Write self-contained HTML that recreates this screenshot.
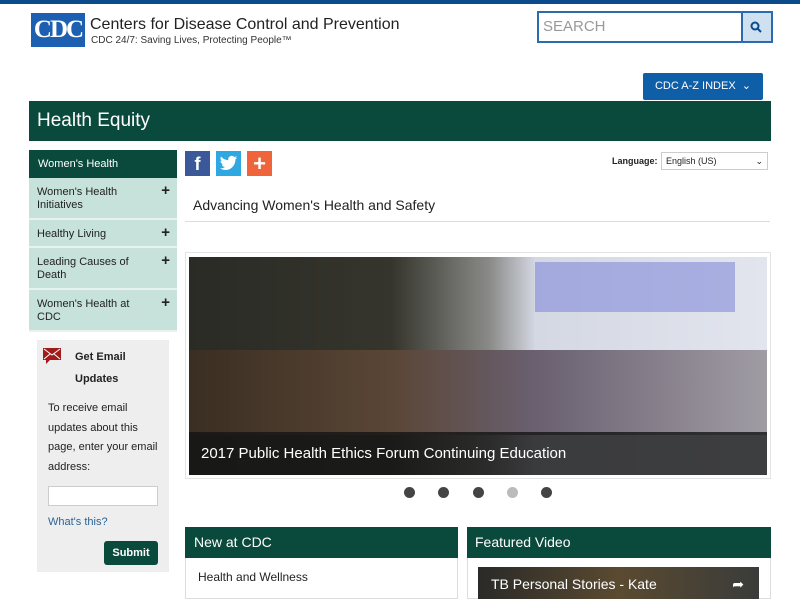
<!DOCTYPE html>
<html><head><style>
*{margin:0;padding:0;box-sizing:border-box}
body{width:800px;height:599px;overflow:hidden;background:#fff;font-family:"Liberation Sans",sans-serif;position:relative;color:#222}
.a{position:absolute}
.g{background:#0a4a3c;color:#fff}
.side{left:29px;width:148px;background:#c6e2da;font-size:11px;color:#222;padding:8px 8px 0 8px;line-height:13px;border-bottom:2px solid #e8f2ef}
.plus{position:absolute;right:7px;top:6px;font-size:15px;font-weight:bold}
</style></head><body>
<div class="a" style="left:0;top:0;width:800px;height:4px;background:#0b4a8b"></div>
<div class="a" style="left:31px;top:13px;width:54px;height:34px;background:#1d5fb0;color:#fff;font-family:'Liberation Serif',serif;font-weight:bold;font-size:25px;line-height:34px;text-align:center;letter-spacing:-2px;overflow:hidden">CDC</div>
<div class="a" style="left:90px;top:16px;font-size:16px;color:#222">Centers for Disease Control and Prevention</div>
<div class="a" style="left:91px;top:35px;font-size:10px;color:#333">CDC 24/7: Saving Lives, Protecting People™</div>
<div class="a" style="left:537px;top:11px;width:236px;height:32px;border:2px solid #2b6cb0;background:#fff"></div>
<div class="a" style="left:543px;top:18px;font-size:15px;color:#999">SEARCH</div>
<div class="a" style="left:741px;top:13px;width:30px;height:28px;background:#cfe0f1;border-left:2px solid #2b6cb0"></div>
<svg class="a" style="left:750px;top:21px" width="12" height="12"><circle cx="5" cy="5" r="3.5" stroke="#0b4a8b" stroke-width="2" fill="none"/><path d="M7.5 7.5l3.5 3.5" stroke="#0b4a8b" stroke-width="2"/></svg>
<div class="a" style="left:643px;top:73px;width:120px;height:27px;background:#0f5ea8;color:#fff;font-size:11px;line-height:27px;text-align:center;border-radius:2px">CDC A-Z INDEX &nbsp;⌄</div>
<div class="a g" style="left:29px;top:101px;width:742px;height:40px;font-size:19px;line-height:40px;padding-left:8px">Health Equity</div>
<div class="a g" style="left:29px;top:150px;width:148px;height:28px;font-size:11px;line-height:28px;padding-left:9px">Women's Health</div>
<div class="a side" style="top:178px;height:42px">Women's Health<br>Initiatives<span class="plus">+</span></div>
<div class="a side" style="top:220px;height:28px">Healthy Living<span class="plus">+</span></div>
<div class="a side" style="top:248px;height:42px">Leading Causes of<br>Death<span class="plus">+</span></div>
<div class="a side" style="top:290px;height:42px">Women's Health at<br>CDC<span class="plus">+</span></div>
<div class="a" style="left:37px;top:340px;width:132px;height:232px;background:#eee"></div>
<svg class="a" style="left:42px;top:346px" width="20" height="20"><path d="M1 2h18v12H8l-4 4v-4H1z" fill="#a01c1c"/><path d="M2 3l8 6 8-6M2 13l6-5M18 13l-6-5" stroke="#fff" fill="none"/></svg>
<div class="a" style="left:75px;top:346px;font-size:11px;font-weight:bold;line-height:22px">Get Email<br>Updates</div>
<div class="a" style="left:48px;top:399px;font-size:11px;line-height:19.5px">To receive email<br>updates about this<br>page, enter your email<br>address:</div>
<div class="a" style="left:48px;top:486px;width:110px;height:20px;background:#fff;border:1px solid #ccc"></div>
<div class="a" style="left:48px;top:516px;font-size:11px;color:#2a6496">What's this?</div>
<div class="a g" style="left:104px;top:541px;width:54px;height:24px;border-radius:3px;font-size:11px;font-weight:bold;line-height:24px;text-align:center">Submit</div>
<div class="a" style="left:185px;top:151px;width:25px;height:25px;background:#3b5998;color:#fff;font-weight:bold;font-size:18px;text-align:center;line-height:27px">f</div>
<div class="a" style="left:216px;top:151px;width:25px;height:25px;background:#2fa7e0"></div>
<svg class="a" style="left:219px;top:155px" width="19" height="17" viewBox="0 0 24 20"><path d="M23 2.5c-.8.4-1.7.6-2.6.7.9-.6 1.6-1.4 2-2.5-.9.5-1.9.9-2.9 1.1A4.5 4.5 0 0 0 11.8 5.9 12.8 12.8 0 0 1 2.5 1.2a4.5 4.5 0 0 0 1.4 6 4.5 4.5 0 0 1-2-.6 4.5 4.5 0 0 0 3.6 4.5 4.5 4.5 0 0 1-2 .1 4.5 4.5 0 0 0 4.2 3.1A9 9 0 0 1 1 16.2 12.8 12.8 0 0 0 7.9 18.2c8.3 0 12.8-6.9 12.8-12.8v-.6c.9-.6 1.6-1.4 2.3-2.3z" fill="#fff"/></svg>
<div class="a" style="left:247px;top:151px;width:25px;height:25px;background:#f0643c;color:#fff;font-weight:bold;font-size:22px;text-align:center;line-height:25px">+</div>
<div class="a" style="left:612px;top:156px;font-size:9px;font-weight:bold">Language:</div>
<div class="a" style="left:661px;top:152px;width:107px;height:18px;border:1px solid #ccc;font-size:9px;line-height:16px;padding-left:4px">English (US)<span style="position:absolute;right:4px">⌄</span></div>
<div class="a" style="left:193px;top:197px;font-size:14px">Advancing Women's Health and Safety</div>
<div class="a" style="left:185px;top:221px;width:585px;height:1px;background:#ddd"></div>
<div class="a" style="left:185px;top:252px;width:586px;height:227px;border:1px solid #e4e4e4;background:#fff"></div>
<div class="a" style="left:189px;top:257px;width:578px;height:218px;background:linear-gradient(90deg,#2a2b25 0%,#35352d 35%,#8a8a88 52%,#d4d8e2 60%,#e2e5ee 100%)"></div>
<div class="a" style="left:535px;top:262px;width:200px;height:50px;background:#7c84d8;opacity:.55"></div>
<div class="a" style="left:189px;top:350px;width:578px;height:85px;background:linear-gradient(90deg,#3a2e22,#5a4636 35%,#6a6070 60%,#a09ca4)"></div>
<div class="a" style="left:189px;top:432px;width:578px;height:43px;background:rgba(20,20,20,.8);color:#fff;font-size:15px;line-height:43px;padding-left:12px">2017 Public Health Ethics Forum Continuing Education</div>
<div class="a" style="left:404px;top:487px;width:11px;height:11px;border-radius:50%;background:#444"></div>
<div class="a" style="left:438px;top:487px;width:11px;height:11px;border-radius:50%;background:#444"></div>
<div class="a" style="left:473px;top:487px;width:11px;height:11px;border-radius:50%;background:#444"></div>
<div class="a" style="left:507px;top:487px;width:11px;height:11px;border-radius:50%;background:#bbb"></div>
<div class="a" style="left:541px;top:487px;width:11px;height:11px;border-radius:50%;background:#444"></div>
<div class="a" style="left:185px;top:527px;width:273px;height:72px;border:1px solid #ddd"></div>
<div class="a g" style="left:185px;top:527px;width:273px;height:31px;font-size:14px;line-height:31px;padding-left:9px">New at CDC</div>
<div class="a" style="left:198px;top:570px;font-size:12px">Health and Wellness</div>
<div class="a" style="left:467px;top:527px;width:304px;height:72px;border:1px solid #ddd"></div>
<div class="a g" style="left:467px;top:527px;width:304px;height:31px;font-size:14px;line-height:31px;padding-left:8px">Featured Video</div>
<div class="a" style="left:478px;top:567px;width:281px;height:32px;background:linear-gradient(90deg,#2a2a28,#5a4a30 50%,#3a3c3a);color:#fff;font-size:14px;padding:9px 0 0 13px">TB Personal Stories - Kate<span style="position:absolute;right:15px">➦</span></div>
</body></html>
